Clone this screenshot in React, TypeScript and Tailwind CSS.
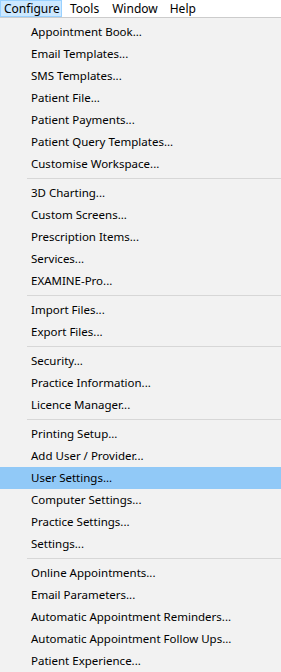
import React from "react";

type Entry = string | null;

const entries: Entry[] = [
  "Appointment Book...",
  "Email Templates...",
  "SMS Templates...",
  "Patient File...",
  "Patient Payments...",
  "Patient Query Templates...",
  "Customise Workspace...",
  null,
  "3D Charting...",
  "Custom Screens...",
  "Prescription Items...",
  "Services...",
  "EXAMINE-Pro...",
  null,
  "Import Files...",
  "Export Files...",
  null,
  "Security...",
  "Practice Information...",
  "Licence Manager...",
  null,
  "Printing Setup...",
  "Add User / Provider...",
  "User Settings...",
  "Computer Settings...",
  "Practice Settings...",
  "Settings...",
  null,
  "Online Appointments...",
  "Email Parameters...",
  "Automatic Appointment Reminders...",
  "Automatic Appointment Follow Ups...",
  "Patient Experience...",
];

export default function App() {
  return (
    <div
      className="w-[281px] h-[672px] overflow-hidden bg-[#f2f2f2] text-[11.5px] text-black"
      style={{ fontFamily: '"Segoe UI", "Noto Sans", "Liberation Sans", sans-serif' }}
    >
      <div className="h-[17px] bg-white flex items-stretch text-[12px]">
        <div className="w-[62px] bg-[#cce8ff] border border-[#99d1ff] flex items-center pl-[3px] leading-none">
          Configure
        </div>
        <div className="flex items-center pl-[8px] leading-none">Tools</div>
        <div className="flex items-center pl-[13px] leading-none">Window</div>
        <div className="flex items-center pl-[12px] leading-none">Help</div>
      </div>
      <div className="h-px bg-[#cccccc]" />
      <div className="pt-[3px] flex flex-col">
        {entries.map((e, i) =>
          e === null ? (
            <div key={i} className="h-[7px] pl-[27px] flex flex-col justify-center">
              <div className="h-px bg-[#d7d7d7]" />
            </div>
          ) : (
            <div
              key={i}
              className={
                "h-[22px] flex items-center pl-[31px] whitespace-nowrap " +
                (e === "User Settings..." ? "bg-[#91c9f7]" : "")
              }
            >
              {e}
            </div>
          )
        )}
      </div>
    </div>
  );
}
